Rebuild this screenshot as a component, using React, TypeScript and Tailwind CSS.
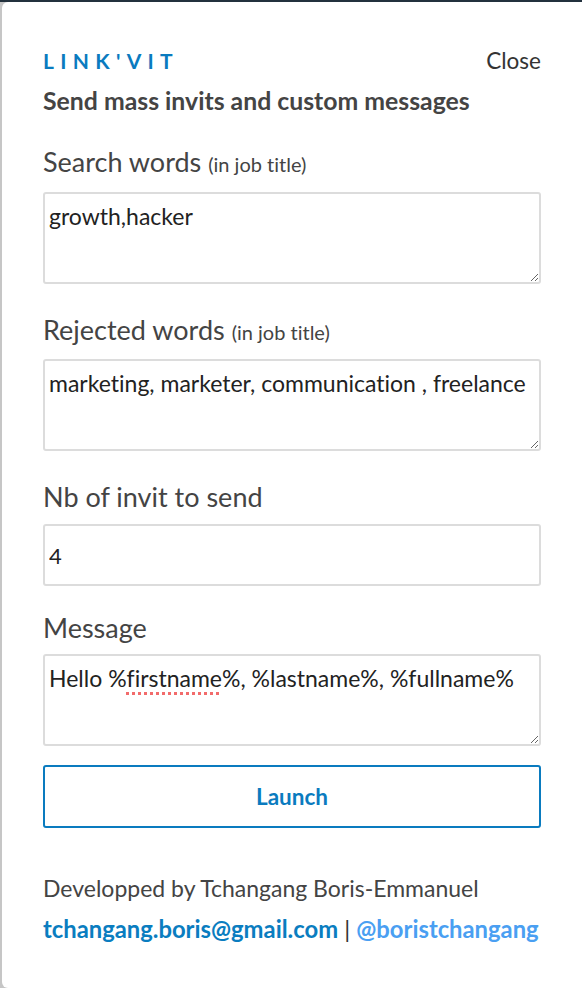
import { useState } from "react"

const fieldClass =
  "block w-full rounded-[3px] border-2 border-[#dcdcdc] bg-white px-[4px] pt-[8px] text-[23px] leading-[28px] text-[#222] outline-none [font-variant-ligatures:none]"

export default function App() {
  const [search, setSearch] = useState("growth,hacker")
  const [rejected, setRejected] = useState("marketing, marketer, communication , freelance")
  const [count, setCount] = useState("4")
  const [message, setMessage] = useState("Hello %firstname%, %lastname%, %fullname%")

  return (
    <div className="min-h-[988px] border-t-2 border-[#23313d] bg-[#c6c6c6] pl-[2px] font-['Lato',sans-serif] [font-variant-ligatures:none]">
      <div className="min-h-[986px] rounded-tl-[6px] rounded-bl-[6px] bg-white pl-[41px] pr-[41px] pt-[42px]">
        {/* Header */}
        <div className="flex h-[34px] items-center justify-between">
          <span className="text-[21px] font-bold tracking-[0.3em] text-[#0a7bbf]">LINK'VIT</span>
          <span className="text-[22.5px] text-[#333]">Close</span>
        </div>
        <p className="mt-[9px] text-[24.8px] font-bold leading-[28px] text-[#444]">
          Send mass invits and custom messages
        </p>

        {/* Search words */}
        <label className="mt-[30px] mb-[11px] block text-[27px] leading-[34px] text-[#444]">
          Search words <span className="text-[20px]">(in job title)</span>
        </label>
        <textarea
          className={`${fieldClass} h-[92px]`}
          value={search}
          onChange={(e) => setSearch(e.target.value)}
        />

        {/* Rejected words */}
        <label className="mt-[29px] mb-[10px] block text-[27px] leading-[34px] text-[#444]">
          Rejected words <span className="text-[20px]">(in job title)</span>
        </label>
        <textarea
          className={`${fieldClass} h-[92px]`}
          value={rejected}
          onChange={(e) => setRejected(e.target.value)}
        />

        {/* Nb of invit */}
        <label className="mt-[29px] mb-[10px] block text-[27px] leading-[34px] text-[#444]">
          Nb of invit to send
        </label>
        <input
          className="block h-[62px] w-full rounded-[3px] border-2 border-[#dcdcdc] bg-white px-[4px] text-[22px] text-[#222] outline-none"
          value={count}
          onChange={(e) => setCount(e.target.value)}
        />

        {/* Message */}
        <label className="mt-[25px] mb-[9px] block text-[27px] leading-[34px] text-[#444]">Message</label>
        <div className="relative">
          <textarea
            className={`${fieldClass} h-[92px]`}
            spellCheck={false}
            value={message}
            onChange={(e) => setMessage(e.target.value)}
          />
          {/* spellcheck squiggle */}
          <div className="pointer-events-none absolute inset-0 border-2 border-transparent px-[4px] pt-[8px] text-[23px] leading-[28px] text-transparent">
            Hello %
            <span className="underline decoration-[#f26b6b] decoration-dotted decoration-[3px] underline-offset-[5px]">
              firstname
            </span>
          </div>
        </div>

        <button className="mt-[19px] block h-[63px] w-full rounded-[3px] border-2 border-[#0a7bbf] bg-white text-[22.5px] font-bold text-[#0a7bbf]">
          Launch
        </button>

        {/* Footer */}
        <p className="mt-[46px] text-[23px] leading-[28px] text-[#444]">Developped by Tchangang Boris-Emmanuel</p>
        <p className="mt-[13px] text-[23.8px] leading-[28px] text-[#333]">
          <a className="font-bold text-[#0a7dc0]">tchangang.boris@gmail.com</a> |{" "}
          <a className="font-bold text-[#4a9ff2]">@boristchangang</a>
        </p>
      </div>
    </div>
  )
}
